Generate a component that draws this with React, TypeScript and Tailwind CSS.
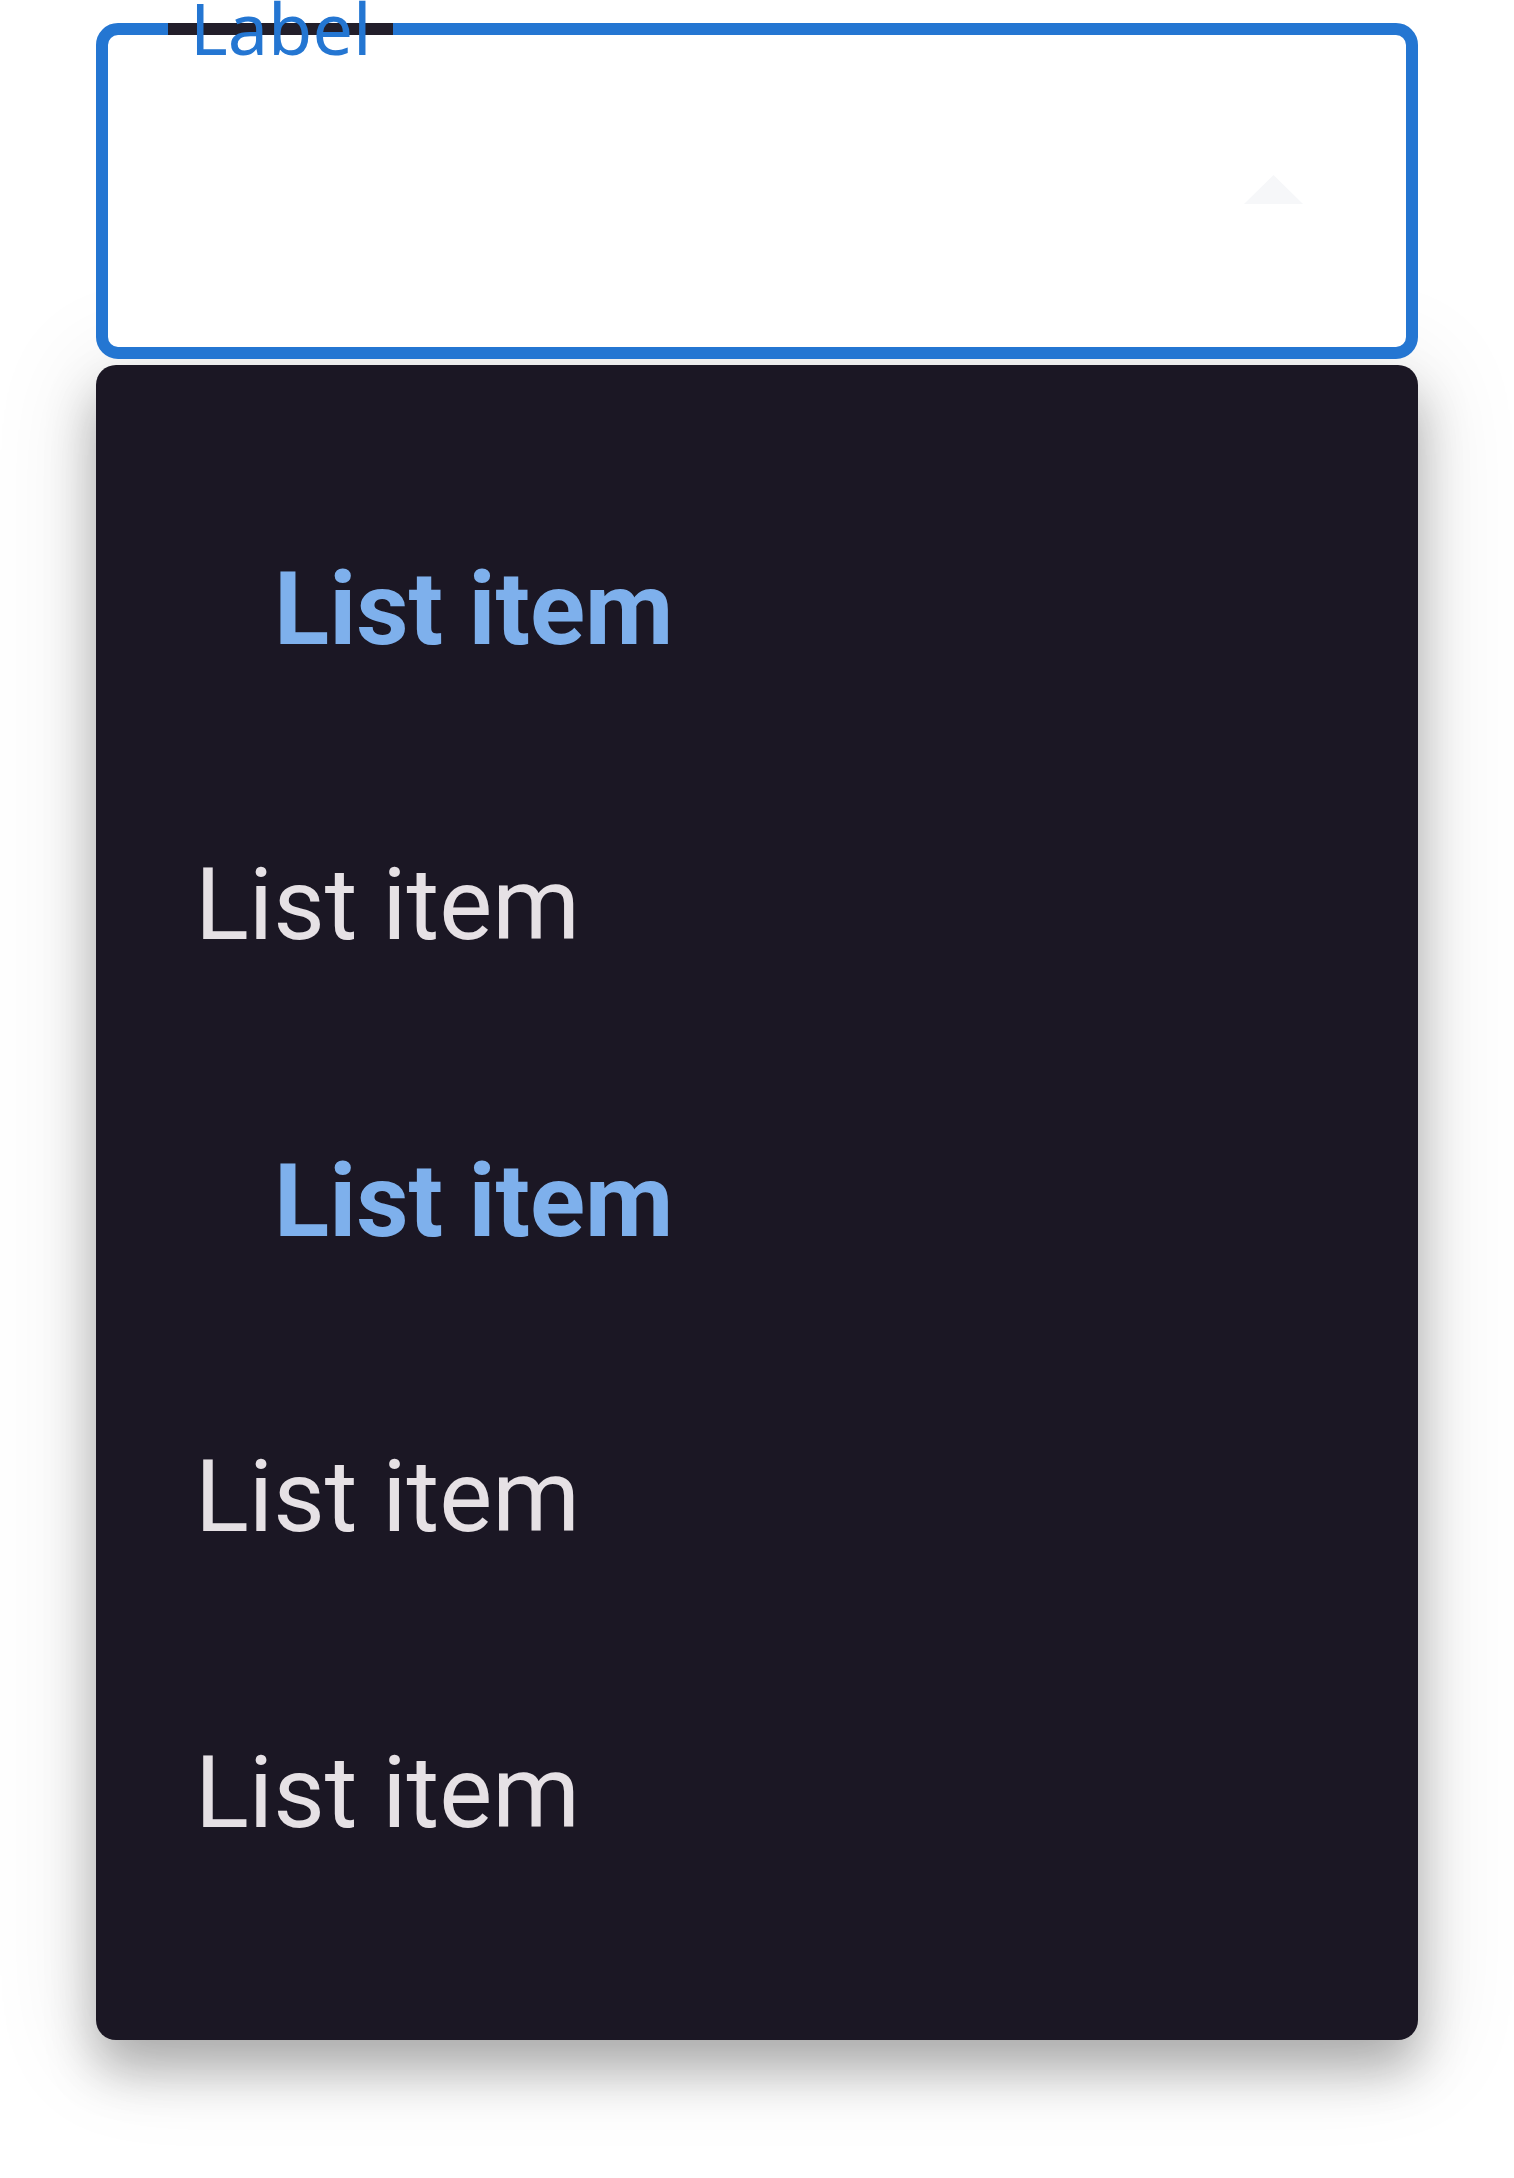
import React from "react";

type Item = { text: string; selected?: boolean };

const items: Item[] = [
  { text: "List item", selected: true },
  { text: "List item" },
  { text: "List item", selected: true },
  { text: "List item" },
  { text: "List item" },
];

export default function App() {
  return (
    <div className="min-h-[2178px] bg-white px-[96px] pt-[23px] font-['Roboto',sans-serif]">
      {/* Select field */}
      <div className="relative flex h-[336px] items-center justify-end rounded-[22px] border-[12px] border-[#2476d2] bg-white pr-[103px]">
        <div className="absolute left-[60px] top-[-12px] h-[12px] w-[225px] bg-[#221e2a]" />
        <span className="absolute left-[82px] top-[-44px] font-['Noto_Sans',sans-serif] text-[72px] leading-none text-[#2476d2]">
          Label
        </span>
        <svg width="59" height="29" viewBox="0 0 59 29" className="mb-[4px]">
          <path d="M29.5 0 L59 29 L0 29 Z" fill="#f6f7f9" />
        </svg>
      </div>

      {/* Menu */}
      <div className="mt-[6px] rounded-[20px] bg-[#1b1724] pt-[96px] pb-[99px] shadow-[0_30px_50px_0_rgba(0,0,0,0.28),0_10px_100px_10px_rgba(0,0,0,0.1)]">
        {items.map((item, i) =>
          item.selected ? (
            <div key={i} className="flex h-[296px] items-center pl-[178px]">
              <span className="text-[102px] font-bold leading-none text-[#7eb0ec]">{item.text}</span>
            </div>
          ) : (
            <div key={i} className="flex h-[296px] items-center pl-[99px]">
              <span className="text-[100px] leading-none text-[#e6e1e5]">{item.text}</span>
            </div>
          )
        )}
      </div>
    </div>
  );
}
